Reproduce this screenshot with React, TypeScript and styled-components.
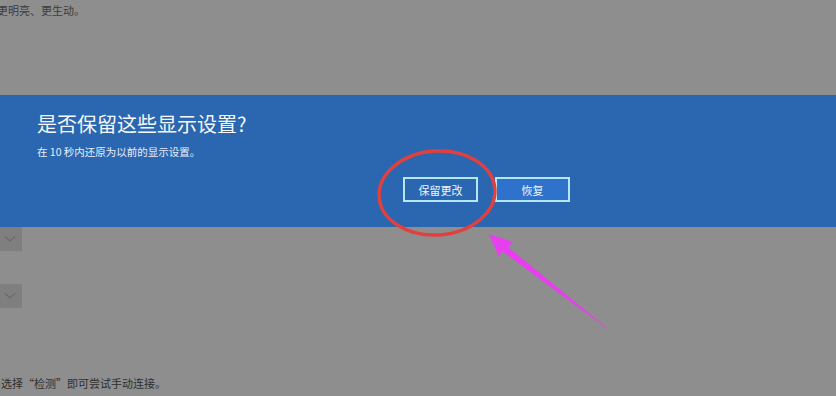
import styled, { createGlobalStyle } from "styled-components";

const GlobalStyle = createGlobalStyle`
  html, body {
    margin: 0;
    padding: 0;
    background: #8e8e8e;
  }
  body {
    font-family: "Noto Sans CJK SC", "Noto Sans", sans-serif;
    overflow: hidden;
  }
`;

const Page = styled.div`
  position: relative;
  width: 836px;
  height: 396px;
  background: #8e8e8e;
  overflow: hidden;
`;

const TopText = styled.div`
  height: 95px;
  padding: 2px 0 0 0;
  box-sizing: border-box;
  margin-left: -3px;
  font-size: 11px;
  color: #3c3c3c;
`;

const Banner = styled.div`
  height: 132px;
  background: #2b66b1;
  box-sizing: border-box;
  padding: 14px 0 0 37px;
  display: flex;
  flex-direction: column;
`;

const Title = styled.h1`
  margin: 0;
  font-size: 20px;
  font-weight: 400;
  line-height: 30px;
  color: #f4f7fc;
`;

const Subtitle = styled.p`
  margin: 6px 0 0;
  font-size: 10.5px;
  line-height: 14px;
  color: #e8eefa;
`;

const Actions = styled.div`
  display: flex;
  gap: 17px;
  margin: 18px 0 0 366px;
`;

const Button = styled.button<{ primary?: boolean }>`
  width: 75px;
  height: 25px;
  box-sizing: border-box;
  border: 2px solid #b4e6f6;
  background: ${({ primary }) => (primary ? "#2b66b1" : "#2f72cc")};
  color: #eef4fc;
  font-family: "Noto Sans CJK SC", sans-serif;
  font-size: 11px;
  padding: 0;
  cursor: pointer;
`;

const Lower = styled.div`
  display: flex;
  flex-direction: column;
  gap: 33px;
`;

const Dropdown = styled.div`
  width: 24px;
  height: 24px;
  background: #7f7f7f;
  display: flex;
  align-items: center;
  justify-content: center;
  margin-left: -2px;
`;

const BottomText = styled.div`
  position: absolute;
  left: 1px;
  top: 375px;
  font-size: 11px;
  color: #2e2e2e;
`;

const Overlay = styled.svg`
  position: absolute;
  left: 0;
  top: 0;
  pointer-events: none;
`;

const Chevron = () => (
  <svg width="12" height="8" viewBox="0 0 12 8">
    <path d="M1 1.5 L6 6 L11 1.5" fill="none" stroke="#6b6b6b" strokeWidth="1.2" />
  </svg>
);

export default function App() {
  return (
    <Page>
      <GlobalStyle />
      <TopText>更明亮、更生动。</TopText>
      <Banner>
        <Title>是否保留这些显示设置?</Title>
        <Subtitle>在 10 秒内还原为以前的显示设置。</Subtitle>
        <Actions>
          <Button primary>保留更改</Button>
          <Button>恢复</Button>
        </Actions>
      </Banner>
      <Lower>
        <Dropdown>
          <Chevron />
        </Dropdown>
        <Dropdown>
          <Chevron />
        </Dropdown>
      </Lower>
      <BottomText>选择“检测”即可尝试手动连接。</BottomText>
      <Overlay width="836" height="396" viewBox="0 0 836 396">
        <ellipse
          cx="437"
          cy="193"
          rx="58"
          ry="42"
          fill="none"
          stroke="#e0413f"
          strokeWidth="3.5"
          transform="rotate(-4 437 193)"
        />
        <polygon
          points="489,234 513,242 508,247 613,333 502,251 499,257"
          fill="#e83ef0"
        />
      </Overlay>
    </Page>
  );
}
